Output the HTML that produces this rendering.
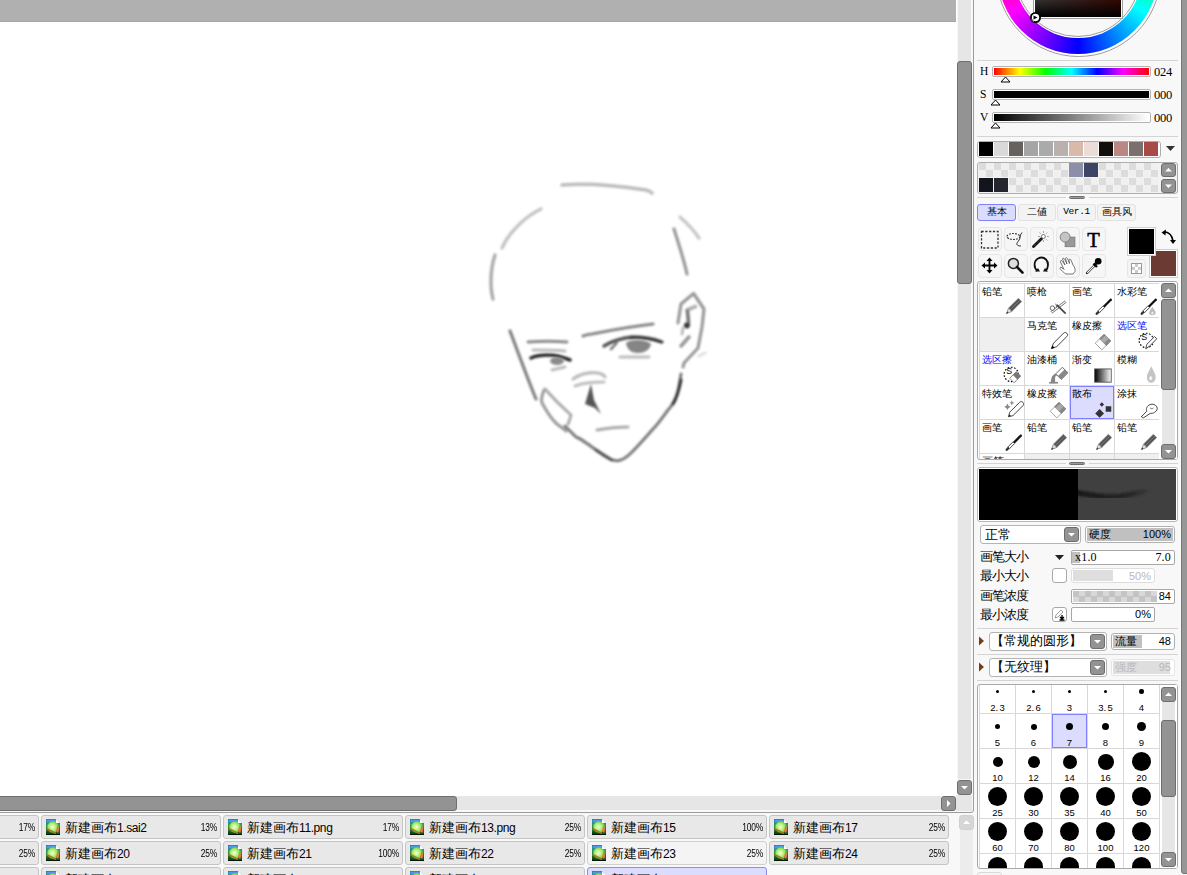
<!DOCTYPE html><html><head><meta charset="utf-8"><style>
*{margin:0;padding:0;box-sizing:border-box}
html,body{width:1187px;height:875px;overflow:hidden;background:#f8f8f8}
body{position:relative;font-family:"Liberation Sans",sans-serif;font-size:12px;color:#000}
div,span,svg{position:absolute}
.t{white-space:nowrap;line-height:1}
.btn{background:#939393;border:1px solid #6e6e6e;border-radius:3px}
.trk{background:#e6e6e6}
</style></head><body><div style="left:0px;top:0px;width:974px;height:813px;background:#f8f8f8;"></div>
<div style="left:0px;top:0px;width:957px;height:796px;background:#fff;"></div>
<div style="left:0px;top:0px;width:956px;height:22px;background:#b0b0b0;border-bottom:1px solid #a6a6a6;"></div>
<div style="left:-4px;top:-4px;width:978px;height:817px;border:1px solid #9c9c9c;border-radius:3px;"></div>
<div style="left:958px;top:0px;width:13px;height:779px;background:#e6e6e6;"></div>
<div class="btn" style="left:957px;top:61px;width:15px;height:223px;"></div>
<div class="btn" style="left:957px;top:780px;width:15px;height:15px;"><svg style="left:0;top:0" width="13" height="13"><path d="M3.0,5.0 L10.0,5.0 L6.5,8.5Z" fill="#fff"/></svg></div>
<div style="left:0px;top:796px;width:941px;height:14px;background:#e6e6e6;"></div>
<div style="left:956px;top:795px;width:16px;height:16px;background:#e6e6e6;"></div>
<div class="btn" style="left:-4px;top:796px;width:461px;height:15px;"></div>
<div class="btn" style="left:941px;top:796px;width:15px;height:15px;"><svg style="left:0;top:0" width="13" height="13"><path d="M5.0,3.0 L5.0,10.0 L8.5,6.5Z" fill="#fff"/></svg></div>

<svg style="left:0;top:0" width="957" height="796" viewBox="0 0 957 796">
<defs><filter id="bl" x="-10%" y="-10%" width="120%" height="120%"><feGaussianBlur stdDeviation="0.85"/></filter></defs>
<g fill="none" stroke-linecap="round" stroke-linejoin="round" filter="url(#bl)">
<path d="M562,185 C585,183 620,186 646,190 C650,191 652,193 652,193" stroke="#bcbcbc" stroke-width="3.6"/>
<path d="M541,209 C528,215 510,230 502,248" stroke="#c4c4c4" stroke-width="3.4"/>
<path d="M495,255 C490,270 490,288 493,299" stroke="#aaaaaa" stroke-width="3.4"/>
<path d="M680,217 C688,224 695,232 699,238" stroke="#c8c8c8" stroke-width="3.4"/>
<path d="M674,229 C679,245 684,260 687,274" stroke="#999" stroke-width="3.2"/>
<path d="M510,331 C518,352 528,380 536,399" stroke="#808080" stroke-width="3.2"/>
<path d="M678,323 L681,304 L693.6,293.5 L704,309 L702,327 L698,348 L684,363 L683,367" stroke="#999" stroke-width="3.2"/>
<path d="M681,374 C680,380 679,388 677,394 C675,400 672,406 668,410 C662,418 658,424 653,429 C646,437 638,446 632,452 C628,456 623,460 619,460.5 C615,461 612,460 610,459 C605,456 600,452 596,450 C588,444 580,438 576,437 C572,433 568,429 565,426" stroke="#7a7a7a" stroke-width="3"/>
<path d="M681,380 C679,390 677,398 673,404" stroke="#333" stroke-width="3"/>
<path d="M612,460 C606,457 600,453 596,450" stroke="#555" stroke-width="3"/>
<path d="M687,310 L695.5,306.5" stroke="#b0b0b0" stroke-width="3.6"/>
<path d="M687.5,311 C688,316 688.5,320 688.5,325" stroke="#777" stroke-width="3.6"/>
<circle cx="686.8" cy="325.5" r="3" fill="#3a3a3a" stroke="none"/>
<path d="M683,328 L682,334" stroke="#bbb" stroke-width="3"/>
<path d="M681,346 L689,337" stroke="#999" stroke-width="3.6"/>
<path d="M544,390 C542,395 541,400 542,403 C547,412 552,420 557,424 C561,427 564,429 566,431" stroke="#999" stroke-width="3"/>
<path d="M545,389 C552,397 562,407 571,415 C570,419 569,422 568,424" stroke="#aaa" stroke-width="3"/>
<path d="M583,336 C586,335 590,334 592,334 C612,330 635,326 653,324" stroke="#888" stroke-width="3.2"/>
<path d="M528,342 C540,341 555,341 567,342" stroke="#8a8a8a" stroke-width="3"/>
<path d="M533,350 C545,350 555,350 565,351" stroke="#bbb" stroke-width="3"/>
<path d="M531,358 C535,356 540,355 548,355 C556,355 563,357 570,360" stroke="#2a2a2a" stroke-width="3.6"/>
<path d="M552,370 C556,369 560,368 565,367" stroke="#bbb" stroke-width="3"/>
<path d="M604,346 C612,341 622,338 632,337 C645,337 654,339 662,342" stroke="#555" stroke-width="3.4"/>
<path d="M630,338 C642,337 652,339 661,342" stroke="#333" stroke-width="2.6"/>
<path d="M611,349 C614,346 616,344 617,342" stroke="#777" stroke-width="2.6"/>
<path d="M620,357 C630,357 640,357 649,357" stroke="#bdbdbd" stroke-width="3"/>
<path d="M573,379 C580,374 590,372 598,373 C602,374 605,376 605,377" stroke="#bbb" stroke-width="3.2"/>
<path d="M575,386 C582,383 592,382 604,382" stroke="#c0c0c0" stroke-width="3"/>
<path d="M597,430 C608,428 618,427 628,427" stroke="#aaa" stroke-width="3"/>
<path d="M699,356 L705,353" stroke="#e0e0e0" stroke-width="3"/>
</g>
<g filter="url(#bl)">
<path d="M626,343 C630,339 646,339 651,344 C650,350 644,353 638,353 C632,353 627,350 626,343Z" fill="#858585"/>
<ellipse cx="557" cy="361" rx="7" ry="4" fill="#8a8a8a"/>
<path d="M591,384 L585,404 L595,408 L601,414 L594,400 Z" fill="#555"/>
</g>
</svg>

<svg style="left:0;top:0" width="0" height="0"><defs>
<linearGradient id="icbg" x1="0" y1="0" x2="0" y2="1"><stop offset="0" stop-color="#1060c8"/><stop offset="0.35" stop-color="#30a050"/><stop offset="1" stop-color="#104010"/></linearGradient>
<radialGradient id="icc" cx="0.45" cy="0.5" r="0.6"><stop offset="0" stop-color="#f4ffe0"/><stop offset="0.5" stop-color="#b0f070"/><stop offset="1" stop-color="#50c040"/></radialGradient>
</defs></svg>
<div style="left:-141px;top:815px;width:180px;height:24px;background:#e8e8e8;border:1px solid #c4c4c4;border-radius:3px;"></div>
<div class="t" style="left:-21px;width:56px;top:822px;font-size:10.5px;letter-spacing:-0.2px;text-align:right;transform:scaleX(0.8);transform-origin:100% 50%;">17%</div>
<div style="left:41px;top:815px;width:180px;height:24px;background:#e8e8e8;border:1px solid #c4c4c4;border-radius:3px;"></div>
<svg style="left:46px;top:819px" width="14" height="16" viewBox="0 0 14 16">
<path d="M0,0 H10 L14,4 V16 H0 Z" fill="url(#icbg)"/>
<rect x="0.5" y="0.5" width="9.5" height="3" fill="#4a9ae8"/>
<circle cx="7" cy="8" r="5.8" fill="url(#icc)"/>
<path d="M11.5,6 C13.5,8 13.5,12 12,14 L10,12Z" fill="#e07a40"/>
<path d="M0.5,9.5 L10,14.5" stroke="#a8782a" stroke-width="1.8"/>
<path d="M0,13 C4,14 8,15 12,16 H0Z" fill="#0a4a10"/>
<path d="M0,15 H14 V16 H0Z" fill="#001800"/>
<path d="M10,0 V4 H14Z" fill="#fff"/>
<path d="M10,0 H14 V4Z" fill="#e8e8e8"/>
</svg>
<div class="t" style="left:65px;top:821px;font-size:13px;">新建画布<span style="position:static;font-size:12px;letter-spacing:-0.4px">1.sai2</span></div>
<div class="t" style="left:161px;width:56px;top:822px;font-size:10.5px;letter-spacing:-0.2px;text-align:right;transform:scaleX(0.8);transform-origin:100% 50%;">13%</div>
<div style="left:223px;top:815px;width:180px;height:24px;background:#e8e8e8;border:1px solid #c4c4c4;border-radius:3px;"></div>
<svg style="left:228px;top:819px" width="14" height="16" viewBox="0 0 14 16">
<path d="M0,0 H10 L14,4 V16 H0 Z" fill="url(#icbg)"/>
<rect x="0.5" y="0.5" width="9.5" height="3" fill="#4a9ae8"/>
<circle cx="7" cy="8" r="5.8" fill="url(#icc)"/>
<path d="M11.5,6 C13.5,8 13.5,12 12,14 L10,12Z" fill="#e07a40"/>
<path d="M0.5,9.5 L10,14.5" stroke="#a8782a" stroke-width="1.8"/>
<path d="M0,13 C4,14 8,15 12,16 H0Z" fill="#0a4a10"/>
<path d="M0,15 H14 V16 H0Z" fill="#001800"/>
<path d="M10,0 V4 H14Z" fill="#fff"/>
<path d="M10,0 H14 V4Z" fill="#e8e8e8"/>
</svg>
<div class="t" style="left:247px;top:821px;font-size:13px;">新建画布<span style="position:static;font-size:12px;letter-spacing:-0.4px">11.png</span></div>
<div class="t" style="left:343px;width:56px;top:822px;font-size:10.5px;letter-spacing:-0.2px;text-align:right;transform:scaleX(0.8);transform-origin:100% 50%;">17%</div>
<div style="left:405px;top:815px;width:180px;height:24px;background:#e8e8e8;border:1px solid #c4c4c4;border-radius:3px;"></div>
<svg style="left:410px;top:819px" width="14" height="16" viewBox="0 0 14 16">
<path d="M0,0 H10 L14,4 V16 H0 Z" fill="url(#icbg)"/>
<rect x="0.5" y="0.5" width="9.5" height="3" fill="#4a9ae8"/>
<circle cx="7" cy="8" r="5.8" fill="url(#icc)"/>
<path d="M11.5,6 C13.5,8 13.5,12 12,14 L10,12Z" fill="#e07a40"/>
<path d="M0.5,9.5 L10,14.5" stroke="#a8782a" stroke-width="1.8"/>
<path d="M0,13 C4,14 8,15 12,16 H0Z" fill="#0a4a10"/>
<path d="M0,15 H14 V16 H0Z" fill="#001800"/>
<path d="M10,0 V4 H14Z" fill="#fff"/>
<path d="M10,0 H14 V4Z" fill="#e8e8e8"/>
</svg>
<div class="t" style="left:429px;top:821px;font-size:13px;">新建画布<span style="position:static;font-size:12px;letter-spacing:-0.4px">13.png</span></div>
<div class="t" style="left:525px;width:56px;top:822px;font-size:10.5px;letter-spacing:-0.2px;text-align:right;transform:scaleX(0.8);transform-origin:100% 50%;">25%</div>
<div style="left:587px;top:815px;width:180px;height:24px;background:#e8e8e8;border:1px solid #c4c4c4;border-radius:3px;"></div>
<svg style="left:592px;top:819px" width="14" height="16" viewBox="0 0 14 16">
<path d="M0,0 H10 L14,4 V16 H0 Z" fill="url(#icbg)"/>
<rect x="0.5" y="0.5" width="9.5" height="3" fill="#4a9ae8"/>
<circle cx="7" cy="8" r="5.8" fill="url(#icc)"/>
<path d="M11.5,6 C13.5,8 13.5,12 12,14 L10,12Z" fill="#e07a40"/>
<path d="M0.5,9.5 L10,14.5" stroke="#a8782a" stroke-width="1.8"/>
<path d="M0,13 C4,14 8,15 12,16 H0Z" fill="#0a4a10"/>
<path d="M0,15 H14 V16 H0Z" fill="#001800"/>
<path d="M10,0 V4 H14Z" fill="#fff"/>
<path d="M10,0 H14 V4Z" fill="#e8e8e8"/>
</svg>
<div class="t" style="left:611px;top:821px;font-size:13px;">新建画布<span style="position:static;font-size:12px;letter-spacing:-0.4px">15</span></div>
<div class="t" style="left:707px;width:56px;top:822px;font-size:10.5px;letter-spacing:-0.2px;text-align:right;transform:scaleX(0.8);transform-origin:100% 50%;">100%</div>
<div style="left:769px;top:815px;width:180px;height:24px;background:#e8e8e8;border:1px solid #c4c4c4;border-radius:3px;"></div>
<svg style="left:774px;top:819px" width="14" height="16" viewBox="0 0 14 16">
<path d="M0,0 H10 L14,4 V16 H0 Z" fill="url(#icbg)"/>
<rect x="0.5" y="0.5" width="9.5" height="3" fill="#4a9ae8"/>
<circle cx="7" cy="8" r="5.8" fill="url(#icc)"/>
<path d="M11.5,6 C13.5,8 13.5,12 12,14 L10,12Z" fill="#e07a40"/>
<path d="M0.5,9.5 L10,14.5" stroke="#a8782a" stroke-width="1.8"/>
<path d="M0,13 C4,14 8,15 12,16 H0Z" fill="#0a4a10"/>
<path d="M0,15 H14 V16 H0Z" fill="#001800"/>
<path d="M10,0 V4 H14Z" fill="#fff"/>
<path d="M10,0 H14 V4Z" fill="#e8e8e8"/>
</svg>
<div class="t" style="left:793px;top:821px;font-size:13px;">新建画布<span style="position:static;font-size:12px;letter-spacing:-0.4px">17</span></div>
<div class="t" style="left:889px;width:56px;top:822px;font-size:10.5px;letter-spacing:-0.2px;text-align:right;transform:scaleX(0.8);transform-origin:100% 50%;">25%</div>
<div style="left:-141px;top:841px;width:180px;height:24px;background:#e8e8e8;border:1px solid #c4c4c4;border-radius:3px;"></div>
<div class="t" style="left:-21px;width:56px;top:848px;font-size:10.5px;letter-spacing:-0.2px;text-align:right;transform:scaleX(0.8);transform-origin:100% 50%;">25%</div>
<div style="left:41px;top:841px;width:180px;height:24px;background:#e8e8e8;border:1px solid #c4c4c4;border-radius:3px;"></div>
<svg style="left:46px;top:845px" width="14" height="16" viewBox="0 0 14 16">
<path d="M0,0 H10 L14,4 V16 H0 Z" fill="url(#icbg)"/>
<rect x="0.5" y="0.5" width="9.5" height="3" fill="#4a9ae8"/>
<circle cx="7" cy="8" r="5.8" fill="url(#icc)"/>
<path d="M11.5,6 C13.5,8 13.5,12 12,14 L10,12Z" fill="#e07a40"/>
<path d="M0.5,9.5 L10,14.5" stroke="#a8782a" stroke-width="1.8"/>
<path d="M0,13 C4,14 8,15 12,16 H0Z" fill="#0a4a10"/>
<path d="M0,15 H14 V16 H0Z" fill="#001800"/>
<path d="M10,0 V4 H14Z" fill="#fff"/>
<path d="M10,0 H14 V4Z" fill="#e8e8e8"/>
</svg>
<div class="t" style="left:65px;top:847px;font-size:13px;">新建画布<span style="position:static;font-size:12px;letter-spacing:-0.4px">20</span></div>
<div class="t" style="left:161px;width:56px;top:848px;font-size:10.5px;letter-spacing:-0.2px;text-align:right;transform:scaleX(0.8);transform-origin:100% 50%;">25%</div>
<div style="left:223px;top:841px;width:180px;height:24px;background:#e8e8e8;border:1px solid #c4c4c4;border-radius:3px;"></div>
<svg style="left:228px;top:845px" width="14" height="16" viewBox="0 0 14 16">
<path d="M0,0 H10 L14,4 V16 H0 Z" fill="url(#icbg)"/>
<rect x="0.5" y="0.5" width="9.5" height="3" fill="#4a9ae8"/>
<circle cx="7" cy="8" r="5.8" fill="url(#icc)"/>
<path d="M11.5,6 C13.5,8 13.5,12 12,14 L10,12Z" fill="#e07a40"/>
<path d="M0.5,9.5 L10,14.5" stroke="#a8782a" stroke-width="1.8"/>
<path d="M0,13 C4,14 8,15 12,16 H0Z" fill="#0a4a10"/>
<path d="M0,15 H14 V16 H0Z" fill="#001800"/>
<path d="M10,0 V4 H14Z" fill="#fff"/>
<path d="M10,0 H14 V4Z" fill="#e8e8e8"/>
</svg>
<div class="t" style="left:247px;top:847px;font-size:13px;">新建画布<span style="position:static;font-size:12px;letter-spacing:-0.4px">21</span></div>
<div class="t" style="left:343px;width:56px;top:848px;font-size:10.5px;letter-spacing:-0.2px;text-align:right;transform:scaleX(0.8);transform-origin:100% 50%;">100%</div>
<div style="left:405px;top:841px;width:180px;height:24px;background:#e8e8e8;border:1px solid #c4c4c4;border-radius:3px;"></div>
<svg style="left:410px;top:845px" width="14" height="16" viewBox="0 0 14 16">
<path d="M0,0 H10 L14,4 V16 H0 Z" fill="url(#icbg)"/>
<rect x="0.5" y="0.5" width="9.5" height="3" fill="#4a9ae8"/>
<circle cx="7" cy="8" r="5.8" fill="url(#icc)"/>
<path d="M11.5,6 C13.5,8 13.5,12 12,14 L10,12Z" fill="#e07a40"/>
<path d="M0.5,9.5 L10,14.5" stroke="#a8782a" stroke-width="1.8"/>
<path d="M0,13 C4,14 8,15 12,16 H0Z" fill="#0a4a10"/>
<path d="M0,15 H14 V16 H0Z" fill="#001800"/>
<path d="M10,0 V4 H14Z" fill="#fff"/>
<path d="M10,0 H14 V4Z" fill="#e8e8e8"/>
</svg>
<div class="t" style="left:429px;top:847px;font-size:13px;">新建画布<span style="position:static;font-size:12px;letter-spacing:-0.4px">22</span></div>
<div class="t" style="left:525px;width:56px;top:848px;font-size:10.5px;letter-spacing:-0.2px;text-align:right;transform:scaleX(0.8);transform-origin:100% 50%;">25%</div>
<div style="left:587px;top:841px;width:180px;height:24px;background:#f4f4f4;border:1px solid #d0d0d0;border-radius:3px;"></div>
<svg style="left:592px;top:845px" width="14" height="16" viewBox="0 0 14 16">
<path d="M0,0 H10 L14,4 V16 H0 Z" fill="url(#icbg)"/>
<rect x="0.5" y="0.5" width="9.5" height="3" fill="#4a9ae8"/>
<circle cx="7" cy="8" r="5.8" fill="url(#icc)"/>
<path d="M11.5,6 C13.5,8 13.5,12 12,14 L10,12Z" fill="#e07a40"/>
<path d="M0.5,9.5 L10,14.5" stroke="#a8782a" stroke-width="1.8"/>
<path d="M0,13 C4,14 8,15 12,16 H0Z" fill="#0a4a10"/>
<path d="M0,15 H14 V16 H0Z" fill="#001800"/>
<path d="M10,0 V4 H14Z" fill="#fff"/>
<path d="M10,0 H14 V4Z" fill="#f4f4f4"/>
</svg>
<div class="t" style="left:611px;top:847px;font-size:13px;">新建画布<span style="position:static;font-size:12px;letter-spacing:-0.4px">23</span></div>
<div class="t" style="left:707px;width:56px;top:848px;font-size:10.5px;letter-spacing:-0.2px;text-align:right;transform:scaleX(0.8);transform-origin:100% 50%;">25%</div>
<div style="left:769px;top:841px;width:180px;height:24px;background:#e8e8e8;border:1px solid #c4c4c4;border-radius:3px;"></div>
<svg style="left:774px;top:845px" width="14" height="16" viewBox="0 0 14 16">
<path d="M0,0 H10 L14,4 V16 H0 Z" fill="url(#icbg)"/>
<rect x="0.5" y="0.5" width="9.5" height="3" fill="#4a9ae8"/>
<circle cx="7" cy="8" r="5.8" fill="url(#icc)"/>
<path d="M11.5,6 C13.5,8 13.5,12 12,14 L10,12Z" fill="#e07a40"/>
<path d="M0.5,9.5 L10,14.5" stroke="#a8782a" stroke-width="1.8"/>
<path d="M0,13 C4,14 8,15 12,16 H0Z" fill="#0a4a10"/>
<path d="M0,15 H14 V16 H0Z" fill="#001800"/>
<path d="M10,0 V4 H14Z" fill="#fff"/>
<path d="M10,0 H14 V4Z" fill="#e8e8e8"/>
</svg>
<div class="t" style="left:793px;top:847px;font-size:13px;">新建画布<span style="position:static;font-size:12px;letter-spacing:-0.4px">24</span></div>
<div class="t" style="left:889px;width:56px;top:848px;font-size:10.5px;letter-spacing:-0.2px;text-align:right;transform:scaleX(0.8);transform-origin:100% 50%;">25%</div>
<div style="left:-141px;top:867px;width:180px;height:24px;background:#e8e8e8;border:1px solid #c4c4c4;border-radius:3px;"></div>
<div style="left:41px;top:867px;width:180px;height:24px;background:#e8e8e8;border:1px solid #c4c4c4;border-radius:3px;"></div>
<svg style="left:46px;top:871px" width="14" height="16" viewBox="0 0 14 16">
<path d="M0,0 H10 L14,4 V16 H0 Z" fill="url(#icbg)"/>
<rect x="0.5" y="0.5" width="9.5" height="3" fill="#4a9ae8"/>
<circle cx="7" cy="8" r="5.8" fill="url(#icc)"/>
<path d="M11.5,6 C13.5,8 13.5,12 12,14 L10,12Z" fill="#e07a40"/>
<path d="M0.5,9.5 L10,14.5" stroke="#a8782a" stroke-width="1.8"/>
<path d="M0,13 C4,14 8,15 12,16 H0Z" fill="#0a4a10"/>
<path d="M0,15 H14 V16 H0Z" fill="#001800"/>
<path d="M10,0 V4 H14Z" fill="#fff"/>
<path d="M10,0 H14 V4Z" fill="#e8e8e8"/>
</svg>
<div class="t" style="left:65px;top:873px;font-size:13px;">新建画布</div>
<div style="left:223px;top:867px;width:180px;height:24px;background:#e8e8e8;border:1px solid #c4c4c4;border-radius:3px;"></div>
<svg style="left:228px;top:871px" width="14" height="16" viewBox="0 0 14 16">
<path d="M0,0 H10 L14,4 V16 H0 Z" fill="url(#icbg)"/>
<rect x="0.5" y="0.5" width="9.5" height="3" fill="#4a9ae8"/>
<circle cx="7" cy="8" r="5.8" fill="url(#icc)"/>
<path d="M11.5,6 C13.5,8 13.5,12 12,14 L10,12Z" fill="#e07a40"/>
<path d="M0.5,9.5 L10,14.5" stroke="#a8782a" stroke-width="1.8"/>
<path d="M0,13 C4,14 8,15 12,16 H0Z" fill="#0a4a10"/>
<path d="M0,15 H14 V16 H0Z" fill="#001800"/>
<path d="M10,0 V4 H14Z" fill="#fff"/>
<path d="M10,0 H14 V4Z" fill="#e8e8e8"/>
</svg>
<div class="t" style="left:247px;top:873px;font-size:13px;">新建画布</div>
<div style="left:405px;top:867px;width:180px;height:24px;background:#e8e8e8;border:1px solid #c4c4c4;border-radius:3px;"></div>
<svg style="left:410px;top:871px" width="14" height="16" viewBox="0 0 14 16">
<path d="M0,0 H10 L14,4 V16 H0 Z" fill="url(#icbg)"/>
<rect x="0.5" y="0.5" width="9.5" height="3" fill="#4a9ae8"/>
<circle cx="7" cy="8" r="5.8" fill="url(#icc)"/>
<path d="M11.5,6 C13.5,8 13.5,12 12,14 L10,12Z" fill="#e07a40"/>
<path d="M0.5,9.5 L10,14.5" stroke="#a8782a" stroke-width="1.8"/>
<path d="M0,13 C4,14 8,15 12,16 H0Z" fill="#0a4a10"/>
<path d="M0,15 H14 V16 H0Z" fill="#001800"/>
<path d="M10,0 V4 H14Z" fill="#fff"/>
<path d="M10,0 H14 V4Z" fill="#e8e8e8"/>
</svg>
<div class="t" style="left:429px;top:873px;font-size:13px;">新建画布</div>
<div style="left:587px;top:867px;width:180px;height:24px;background:#dcdcff;border:1px solid #8c8cf0;border-radius:3px;"></div>
<svg style="left:592px;top:871px" width="14" height="16" viewBox="0 0 14 16">
<path d="M0,0 H10 L14,4 V16 H0 Z" fill="url(#icbg)"/>
<rect x="0.5" y="0.5" width="9.5" height="3" fill="#4a9ae8"/>
<circle cx="7" cy="8" r="5.8" fill="url(#icc)"/>
<path d="M11.5,6 C13.5,8 13.5,12 12,14 L10,12Z" fill="#e07a40"/>
<path d="M0.5,9.5 L10,14.5" stroke="#a8782a" stroke-width="1.8"/>
<path d="M0,13 C4,14 8,15 12,16 H0Z" fill="#0a4a10"/>
<path d="M0,15 H14 V16 H0Z" fill="#001800"/>
<path d="M10,0 V4 H14Z" fill="#fff"/>
<path d="M10,0 H14 V4Z" fill="#dcdcff"/>
</svg>
<div class="t" style="left:611px;top:873px;font-size:13px;">新建画布</div>
<div style="left:960px;top:830px;width:13px;height:45px;background:#ececec;"></div>
<div class="btn" style="background:#d6d6d6;border-color:#d0d0d0;left:959px;top:815px;width:15px;height:15px;"><svg style="left:0;top:0" width="13" height="13"><path d="M3.0,8.0 L10.0,8.0 L6.5,4.5Z" fill="#fff"/></svg></div>
<div style="left:974px;top:0px;width:213px;height:875px;background:#f8f8f8;"></div>
<div style="left:1180px;top:0px;width:1px;height:875px;background:#fcfcfc;"></div>
<div style="left:1181px;top:-5px;width:8px;height:879px;background:#979797;border:1px solid #737373;border-radius:3px;"></div>
<div style="left:995.5px;top:-108.5px;width:165.0px;height:165.0px;border-radius:50%;background:#fff;border:1px solid #9c9c9c;"></div>
<div style="left:997.8px;top:-106.2px;width:160.4px;height:160.4px;border-radius:50%;background:conic-gradient(from -60deg,#f00,#ff0,#0f0,#0ff,#00f,#f0f,#f00);"></div>
<div style="left:1013.6px;top:-90.4px;width:128.8px;height:128.8px;border-radius:50%;background:#fff;"></div>
<div style="left:1014.8px;top:-89.2px;width:126.4px;height:126.4px;border-radius:50%;background:#f8f8f8;border:1px solid #9c9c9c;"></div>
<div style="left:1033px;top:-72px;width:90px;height:91px;background:#fff;border:1px solid #a0a0a0;"></div>
<div style="left:1035px;top:-70px;width:86px;height:87px;background:linear-gradient(to top,#000,rgba(0,0,0,0)),linear-gradient(to right,#fff,#ff2200);"></div>
<svg style="left:1029px;top:11px" width="13" height="13"><circle cx="6.5" cy="6.5" r="4.6" fill="#fff" stroke="#000" stroke-width="1.8"/><path d="M4.5,4.5 L8.5,6.5 L4.5,8.5Z" fill="#000"/><path d="M2.5,8 A4.6,4.6 0 0 0 5,11" stroke="#3a3" stroke-width="1" fill="none"/></svg>
<div style="left:977px;top:60px;width:201px;height:1px;background:#d4d4d4;"></div>
<div class="t" style="left:980px;top:66px;font-size:11.5px;color:#000;font-family:'Liberation Serif',serif;">H</div>
<div style="left:992px;top:66px;width:159px;height:11px;background:#fff;border:1px solid #b4b4b4;border-radius:2px;"></div>
<div style="left:994px;top:68px;width:155px;height:7px;background:linear-gradient(to right,#f00,#ff0,#0f0,#0ff,#00f,#f0f,#f00);"></div>
<div class="t" style="left:1154px;top:66px;font-size:12.5px;color:#000;font-family:'Liberation Serif',serif;letter-spacing:-0.3px;">024</div>
<svg style="left:999.5px;top:76px" width="11" height="7"><path d="M1,6 L5.5,1 L10,6Z" fill="#fff" stroke="#000" stroke-width="1" stroke-linejoin="miter"/></svg>
<div class="t" style="left:980px;top:89px;font-size:11.5px;color:#000;font-family:'Liberation Serif',serif;">S</div>
<div style="left:992px;top:89px;width:159px;height:11px;background:#fff;border:1px solid #b4b4b4;border-radius:2px;"></div>
<div style="left:994px;top:91px;width:155px;height:7px;background:#000;"></div>
<div class="t" style="left:1154px;top:89px;font-size:12.5px;color:#000;font-family:'Liberation Serif',serif;letter-spacing:-0.3px;">000</div>
<svg style="left:989.5px;top:99px" width="11" height="7"><path d="M1,6 L5.5,1 L10,6Z" fill="#fff" stroke="#000" stroke-width="1" stroke-linejoin="miter"/></svg>
<div class="t" style="left:980px;top:112px;font-size:11.5px;color:#000;font-family:'Liberation Serif',serif;">V</div>
<div style="left:992px;top:112px;width:159px;height:11px;background:#fff;border:1px solid #b4b4b4;border-radius:2px;"></div>
<div style="left:994px;top:114px;width:155px;height:7px;background:linear-gradient(to right,#000,#fff);"></div>
<div class="t" style="left:1154px;top:112px;font-size:12.5px;color:#000;font-family:'Liberation Serif',serif;letter-spacing:-0.3px;">000</div>
<svg style="left:989.5px;top:122px" width="11" height="7"><path d="M1,6 L5.5,1 L10,6Z" fill="#fff" stroke="#000" stroke-width="1" stroke-linejoin="miter"/></svg>
<div style="left:977px;top:136px;width:201px;height:1px;background:#d4d4d4;"></div>
<div style="left:977px;top:141px;width:184px;height:17px;background:#fff;border:1px solid #adadad;border-radius:3px;"></div>
<div style="left:979px;top:142px;width:14px;height:14px;background:#000000;"></div>
<div style="left:994px;top:142px;width:14px;height:14px;background:#d9d9d9;"></div>
<div style="left:1009px;top:142px;width:14px;height:14px;background:#67625e;"></div>
<div style="left:1024px;top:142px;width:14px;height:14px;background:#a5a5a5;"></div>
<div style="left:1039px;top:142px;width:14px;height:14px;background:#aaaaaa;"></div>
<div style="left:1054px;top:142px;width:14px;height:14px;background:#b8b1ad;"></div>
<div style="left:1069px;top:142px;width:14px;height:14px;background:#d8b9aa;"></div>
<div style="left:1084px;top:142px;width:14px;height:14px;background:#eaddd8;"></div>
<div style="left:1099px;top:142px;width:14px;height:14px;background:#110e0c;"></div>
<div style="left:1114px;top:142px;width:14px;height:14px;background:#ba8785;"></div>
<div style="left:1129px;top:142px;width:14px;height:14px;background:#7b706d;"></div>
<div style="left:1144px;top:142px;width:14px;height:14px;background:#a84a47;"></div>
<svg style="left:1165px;top:145px" width="11" height="7"><path d="M1,1 L10,1 L5.5,6Z" fill="#333"/></svg>
<div style="left:977px;top:162px;width:201px;height:32px;background:#f2f2f2;border:1px solid #adadad;border-radius:3px;"></div>
<div style="left:979px;top:163px;width:14px;height:14px;background:conic-gradient(#f0f0f0 25%,#dcdcdc 0 50%,#f0f0f0 0 75%,#dcdcdc 0);"></div>
<div style="left:994px;top:163px;width:14px;height:14px;background:conic-gradient(#f0f0f0 25%,#dcdcdc 0 50%,#f0f0f0 0 75%,#dcdcdc 0);"></div>
<div style="left:1009px;top:163px;width:14px;height:14px;background:conic-gradient(#f0f0f0 25%,#dcdcdc 0 50%,#f0f0f0 0 75%,#dcdcdc 0);"></div>
<div style="left:1024px;top:163px;width:14px;height:14px;background:conic-gradient(#f0f0f0 25%,#dcdcdc 0 50%,#f0f0f0 0 75%,#dcdcdc 0);"></div>
<div style="left:1039px;top:163px;width:14px;height:14px;background:conic-gradient(#f0f0f0 25%,#dcdcdc 0 50%,#f0f0f0 0 75%,#dcdcdc 0);"></div>
<div style="left:1054px;top:163px;width:14px;height:14px;background:conic-gradient(#f0f0f0 25%,#dcdcdc 0 50%,#f0f0f0 0 75%,#dcdcdc 0);"></div>
<div style="left:1069px;top:163px;width:14px;height:14px;background:conic-gradient(#f0f0f0 25%,#dcdcdc 0 50%,#f0f0f0 0 75%,#dcdcdc 0);"></div>
<div style="left:1084px;top:163px;width:14px;height:14px;background:conic-gradient(#f0f0f0 25%,#dcdcdc 0 50%,#f0f0f0 0 75%,#dcdcdc 0);"></div>
<div style="left:1099px;top:163px;width:14px;height:14px;background:conic-gradient(#f0f0f0 25%,#dcdcdc 0 50%,#f0f0f0 0 75%,#dcdcdc 0);"></div>
<div style="left:1114px;top:163px;width:14px;height:14px;background:conic-gradient(#f0f0f0 25%,#dcdcdc 0 50%,#f0f0f0 0 75%,#dcdcdc 0);"></div>
<div style="left:1129px;top:163px;width:14px;height:14px;background:conic-gradient(#f0f0f0 25%,#dcdcdc 0 50%,#f0f0f0 0 75%,#dcdcdc 0);"></div>
<div style="left:1144px;top:163px;width:14px;height:14px;background:conic-gradient(#f0f0f0 25%,#dcdcdc 0 50%,#f0f0f0 0 75%,#dcdcdc 0);"></div>
<div style="left:979px;top:178px;width:14px;height:14px;background:conic-gradient(#f0f0f0 25%,#dcdcdc 0 50%,#f0f0f0 0 75%,#dcdcdc 0);"></div>
<div style="left:994px;top:178px;width:14px;height:14px;background:conic-gradient(#f0f0f0 25%,#dcdcdc 0 50%,#f0f0f0 0 75%,#dcdcdc 0);"></div>
<div style="left:1009px;top:178px;width:14px;height:14px;background:conic-gradient(#f0f0f0 25%,#dcdcdc 0 50%,#f0f0f0 0 75%,#dcdcdc 0);"></div>
<div style="left:1024px;top:178px;width:14px;height:14px;background:conic-gradient(#f0f0f0 25%,#dcdcdc 0 50%,#f0f0f0 0 75%,#dcdcdc 0);"></div>
<div style="left:1039px;top:178px;width:14px;height:14px;background:conic-gradient(#f0f0f0 25%,#dcdcdc 0 50%,#f0f0f0 0 75%,#dcdcdc 0);"></div>
<div style="left:1054px;top:178px;width:14px;height:14px;background:conic-gradient(#f0f0f0 25%,#dcdcdc 0 50%,#f0f0f0 0 75%,#dcdcdc 0);"></div>
<div style="left:1069px;top:178px;width:14px;height:14px;background:conic-gradient(#f0f0f0 25%,#dcdcdc 0 50%,#f0f0f0 0 75%,#dcdcdc 0);"></div>
<div style="left:1084px;top:178px;width:14px;height:14px;background:conic-gradient(#f0f0f0 25%,#dcdcdc 0 50%,#f0f0f0 0 75%,#dcdcdc 0);"></div>
<div style="left:1099px;top:178px;width:14px;height:14px;background:conic-gradient(#f0f0f0 25%,#dcdcdc 0 50%,#f0f0f0 0 75%,#dcdcdc 0);"></div>
<div style="left:1114px;top:178px;width:14px;height:14px;background:conic-gradient(#f0f0f0 25%,#dcdcdc 0 50%,#f0f0f0 0 75%,#dcdcdc 0);"></div>
<div style="left:1129px;top:178px;width:14px;height:14px;background:conic-gradient(#f0f0f0 25%,#dcdcdc 0 50%,#f0f0f0 0 75%,#dcdcdc 0);"></div>
<div style="left:1144px;top:178px;width:14px;height:14px;background:conic-gradient(#f0f0f0 25%,#dcdcdc 0 50%,#f0f0f0 0 75%,#dcdcdc 0);"></div>
<div style="left:1069px;top:163px;width:14px;height:14px;background:#8b8fa8;"></div>
<div style="left:1084px;top:163px;width:14px;height:14px;background:#3d4466;"></div>
<div style="left:979px;top:178px;width:14px;height:14px;background:#12151c;"></div>
<div style="left:994px;top:178px;width:14px;height:14px;background:#25252d;"></div>
<div class="btn" style="left:1161px;top:163px;width:15px;height:14px;"><svg style="left:0;top:0" width="13" height="12"><path d="M3.0,7.5 L10.0,7.5 L6.5,4.0Z" fill="#fff"/></svg></div>
<div class="btn" style="left:1161px;top:179px;width:15px;height:14px;"><svg style="left:0;top:0" width="13" height="12"><path d="M3.0,4.5 L10.0,4.5 L6.5,8.0Z" fill="#fff"/></svg></div>
<div style="left:977px;top:197px;width:89px;height:1px;background:#d4d4d4;"></div>
<div style="left:1089px;top:197px;width:89px;height:1px;background:#d4d4d4;"></div>
<div style="left:1069px;top:196px;width:16px;height:3px;background:#9a9a9a;border:1px solid #6e6e6e;border-radius:2px;"></div>
<div style="left:977px;top:204px;width:39px;height:17px;background:#dcdcff;border:1px solid #8080ff;border-radius:3px;"></div>
<div class="t" style="left:977px;width:39px;text-align:center;top:207px;font-size:10.3px;">基本</div>
<div style="left:1018px;top:204px;width:38px;height:17px;background:#f3f3f3;border:1px solid #e2e2e2;border-radius:3px;"></div>
<div class="t" style="left:1018px;width:38px;text-align:center;top:207px;font-size:10.3px;">二値</div>
<div style="left:1057px;top:204px;width:39px;height:17px;background:#f3f3f3;border:1px solid #e2e2e2;border-radius:3px;"></div>
<div class="t" style="left:1057px;width:39px;text-align:center;top:207px;font-size:9.5px;letter-spacing:-0.4px;font-family:'Liberation Mono',monospace;">Ver.1</div>
<div style="left:1097px;top:204px;width:39px;height:17px;background:#f3f3f3;border:1px solid #e2e2e2;border-radius:3px;"></div>
<div class="t" style="left:1097px;width:39px;text-align:center;top:207px;font-size:10.3px;">画具风</div>
<div style="left:978px;top:227px;width:24px;height:24px;background:#f6f6f6;border:1px solid #e6e6e6;border-radius:4px;"></div>
<svg style="left:978px;top:227px" width="24" height="24" viewBox="0 0 24 24"><rect x="3.5" y="4.5" width="16.5" height="16.5" fill="none" stroke="#333" stroke-width="1.3" stroke-dasharray="2.2,1.6"/></svg>
<div style="left:1004px;top:227px;width:24px;height:24px;background:#f6f6f6;border:1px solid #e6e6e6;border-radius:4px;"></div>
<svg style="left:1004px;top:227px" width="24" height="24" viewBox="0 0 24 24"><ellipse cx="9.4" cy="9.5" rx="6.4" ry="3" fill="none" stroke="#333" stroke-width="1.1" stroke-dasharray="1.8,1.2"/><path d="M18,5.5 C15,9 17,11 14.5,14 C12,16.5 12,19 17,19" fill="none" stroke="#333" stroke-width="1"/></svg>
<div style="left:1030px;top:227px;width:24px;height:24px;background:#f6f6f6;border:1px solid #e6e6e6;border-radius:4px;"></div>
<svg style="left:1030px;top:227px" width="24" height="24" viewBox="0 0 24 24"><path d="M3.5,19.5 L11.7,11.5" stroke="#111" stroke-width="2.8" stroke-linecap="round"/><path d="M4,19 L11.5,11.7" stroke="#888" stroke-width="0.6" stroke-dasharray="1,1"/><circle cx="13.4" cy="9.5" r="2" fill="#fff" stroke="#666" stroke-width="0.9"/><path d="M13.4,4 V6 M13.4,13 V15 M8,9.5 H10 M17,9.5 H19 M9.5,5.5 L10.8,6.8 M17.3,5.5 L16,6.8 M17.3,13.5 L16,12.2" stroke="#999" stroke-width="0.9"/></svg>
<div style="left:1056px;top:227px;width:24px;height:24px;background:#f6f6f6;border:1px solid #e6e6e6;border-radius:4px;"></div>
<svg style="left:1056px;top:227px" width="24" height="24" viewBox="0 0 24 24"><rect x="9.1" y="10.1" width="9.8" height="9.6" fill="#999" stroke="#777" stroke-width="0.8"/><circle cx="9.1" cy="10.1" r="5" fill="#c4c4c4" stroke="#777" stroke-width="0.8"/></svg>
<div style="left:1082px;top:227px;width:24px;height:24px;background:#f6f6f6;border:1px solid #e6e6e6;border-radius:4px;"></div>
<svg style="left:1082px;top:227px" width="24" height="24" viewBox="0 0 24 24"><text x="11.6" y="20" font-family="Liberation Serif" font-size="20.5" text-anchor="middle" fill="#000" stroke="#000" stroke-width="0.5">T</text></svg>
<div style="left:978px;top:254px;width:24px;height:24px;background:#f6f6f6;border:1px solid #e6e6e6;border-radius:4px;"></div>
<svg style="left:978px;top:254px" width="24" height="24" viewBox="0 0 24 24"><path d="M11.5,5 V18 M5,11.5 H18" stroke="#000" stroke-width="1.8"/><path d="M11.5,3.5 L8.5,7 H14.5Z M11.5,19.5 L8.5,16 H14.5Z M3.5,11.5 L7,8.5 V14.5Z M19.5,11.5 L16,8.5 V14.5Z" fill="#000"/></svg>
<div style="left:1004px;top:254px;width:24px;height:24px;background:#f6f6f6;border:1px solid #e6e6e6;border-radius:4px;"></div>
<svg style="left:1004px;top:254px" width="24" height="24" viewBox="0 0 24 24"><circle cx="9.4" cy="9.4" r="5" fill="#ddd" stroke="#222" stroke-width="1.5"/><path d="M13,13 L18.5,18.6" stroke="#111" stroke-width="2.6" stroke-linecap="round"/></svg>
<div style="left:1030px;top:254px;width:24px;height:24px;background:#f6f6f6;border:1px solid #e6e6e6;border-radius:4px;"></div>
<svg style="left:1030px;top:254px" width="24" height="24" viewBox="0 0 24 24"><path d="M7.5,17 C3.5,14 3.5,7 8,4.5 C11,3 14,3.5 16,5.5 C19,8.5 18.5,14 15.5,17" fill="none" stroke="#111" stroke-width="1.8"/><path d="M5,17.5 L10,17.5 L8,14Z M13,17.5 L18,17.5 L15,14Z" fill="#111"/></svg>
<div style="left:1056px;top:254px;width:24px;height:24px;background:#f6f6f6;border:1px solid #e6e6e6;border-radius:4px;"></div>
<svg style="left:1056px;top:254px" width="24" height="24" viewBox="0 0 24 24"><path d="M10,20 C8,19 5,16 4,14.5 C4,13 5.5,13 7,14.5 L8,15.5 L4.5,8 C4,6.5 5.5,6 6.5,7.5 L9,11 L6.5,5 C6.5,4 8,4 8.5,5 L11,10 L9.5,4.5 C9.5,3.5 11,3.5 11.5,4.5 L13.5,9.5 L13,6 C13,5 14.5,5 15,6 L17,11 C18.5,13 19.5,15 19,17.5 L17,20 Z" fill="#fff" stroke="#555" stroke-width="0.8"/></svg>
<div style="left:1082px;top:254px;width:24px;height:24px;background:#f6f6f6;border:1px solid #e6e6e6;border-radius:4px;"></div>
<svg style="left:1082px;top:254px" width="24" height="24" viewBox="0 0 24 24"><path d="M5,19 L13,11" stroke="#222" stroke-width="2.4" stroke-linecap="round"/><path d="M5.2,18.8 L12.8,11.2" stroke="#fff" stroke-width="1.1"/><path d="M11.5,9.5 L15,13" stroke="#000" stroke-width="2.4"/><circle cx="16.2" cy="7.2" r="3.3" fill="#000"/><path d="M13.5,8 L15.5,10" stroke="#000" stroke-width="3"/></svg>
<div style="left:1149px;top:249px;width:29px;height:29px;background:#fff;border:1px solid #cfcfcf;"></div>
<div style="left:1151px;top:251px;width:25px;height:25px;background:#6b3a33;"></div>
<div style="left:1127px;top:227px;width:29px;height:29px;background:#fff;border:1px solid #cfcfcf;"></div>
<div style="left:1129px;top:229px;width:25px;height:25px;background:#000;"></div>
<svg style="left:1160px;top:229px" width="17" height="16"><path d="M4,3 C9,3 12,6 13,12" fill="none" stroke="#000" stroke-width="1.6"/><path d="M1.5,3.5 L6,0.5 L5.5,6.5Z M10,11 L16,11 L13,15Z" fill="#000"/></svg>
<div style="left:1127px;top:259px;width:19px;height:19px;background:#f4f4f4;border:1px solid #e6e6e6;border-radius:3px;"></div>
<div style="left:1131px;top:263px;width:11px;height:11px;border:1px solid #999;background-color:#fff;background-image:linear-gradient(45deg,#ccc 25%,transparent 25%,transparent 75%,#ccc 75%),linear-gradient(45deg,#ccc 25%,transparent 25%,transparent 75%,#ccc 75%);background-size:6px 6px;background-position:0 0,3px 3px;"></div>
<div style="left:977px;top:281px;width:201px;height:179px;background:#fff;border:1px solid #a8a8a8;border-radius:3px;"></div>
<div style="left:979px;top:283px;width:180px;height:176px;background:#d8d8d8;"></div>
<div style="left:980px;top:284px;width:44px;height:33px;background:#fff;"></div>
<div class="t" style="left:982px;top:287px;font-size:10px;color:#000;">铅笔</div>
<svg style="left:1003px;top:297px" width="21" height="20" viewBox="0 0 19 18"><path d="M3,15 L5,10 L14,1 L17,4 L8,13 Z" fill="#555"/><path d="M5,10 L14,1 M6.5,11.5 L15.5,2.5 M8,13 L17,4" stroke="#888" stroke-width="0.6"/><path d="M3,15 L5,10 L8,13Z" fill="#ddd" stroke="#777" stroke-width="0.5"/><path d="M3,15 L3.8,13 L5,14.2Z" fill="#333"/></svg>
<div style="left:1025px;top:284px;width:44px;height:33px;background:#fff;"></div>
<div class="t" style="left:1027px;top:287px;font-size:10px;color:#000;">喷枪</div>
<svg style="left:1048px;top:297px" width="21" height="20" viewBox="0 0 19 18"><path d="M3,14 L16,4" stroke="#555" stroke-width="2.4"/><path d="M3,14 L16,4" stroke="#fff" stroke-width="1.2"/><path d="M8,7 L16,15" stroke="#444" stroke-width="1.5"/><circle cx="4" cy="10" r="2" fill="#fff" stroke="#555" stroke-width="0.8"/><path d="M7,6 L8,9" stroke="#555" stroke-width="0.8"/></svg>
<div style="left:1070px;top:284px;width:44px;height:33px;background:#fff;"></div>
<div class="t" style="left:1072px;top:287px;font-size:10px;color:#000;">画笔</div>
<svg style="left:1093px;top:297px" width="21" height="20" viewBox="0 0 19 18"><path d="M9,8 L15.5,1.5 C16.5,1 17.5,2 17,3 L10.5,9.5Z" fill="#111"/><path d="M9,8 L10.5,9.5 L6,14 L4.5,12.5Z" fill="#fff" stroke="#333" stroke-width="0.8"/><path d="M4.5,12.5 L6,14 L4,16 C2.5,16.5 2,15.5 2.5,14.5Z" fill="#333"/></svg>
<div style="left:1115px;top:284px;width:44px;height:33px;background:#fff;"></div>
<div class="t" style="left:1117px;top:287px;font-size:10px;color:#000;">水彩笔</div>
<svg style="left:1138px;top:297px" width="21" height="20" viewBox="0 0 19 18"><path d="M9,8 L15.5,1.5 C16.5,1 17.5,2 17,3 L10.5,9.5Z" fill="#111"/><path d="M9,8 L10.5,9.5 L6,14 L4.5,12.5Z" fill="#fff" stroke="#333" stroke-width="0.8"/><path d="M4.5,12.5 L6,14 L4,16 C2.5,16.5 2,15.5 2.5,14.5Z" fill="#333"/><path d="M13,9 C15,12 16,13 16,14.5 C16,16 14,16.5 13,16.5 C11.5,16.5 10,16 10,14.5 C10,13 11,12 13,9Z" fill="#bbb"/><ellipse cx="13" cy="14.5" rx="1" ry="1.2" fill="#eee"/></svg>
<div style="left:980px;top:318px;width:44px;height:33px;background:#efefef;"></div>
<div style="left:1025px;top:318px;width:44px;height:33px;background:#fff;"></div>
<div class="t" style="left:1027px;top:321px;font-size:10px;color:#000;">马克笔</div>
<svg style="left:1048px;top:331px" width="21" height="20" viewBox="0 0 19 18"><path d="M3,16 L5,11 L14,2 C15,1 16,1 17,2 C18,3 18,4 17,5 L8,14 Z" fill="#fff" stroke="#444" stroke-width="0.9"/><path d="M3,16 L4,13 L6,15Z" fill="#000"/></svg>
<div style="left:1070px;top:318px;width:44px;height:33px;background:#fff;"></div>
<div class="t" style="left:1072px;top:321px;font-size:10px;color:#000;">橡皮擦</div>
<svg style="left:1093px;top:331px" width="21" height="20" viewBox="0 0 19 18"><path d="M2,11 L10,3 L16,9 L8,17Z" fill="#fff" stroke="#999" stroke-width="0.8"/><path d="M6,7 L10,3 L16,9 L12,13Z" fill="#888" stroke="#777" stroke-width="0.6"/><path d="M7,8 L11,4 L14,7 L10,11Z" fill="#aaa"/></svg>
<div style="left:1115px;top:318px;width:44px;height:33px;background:#fff;"></div>
<div class="t" style="left:1117px;top:321px;font-size:10px;color:#0000ff;">选区笔</div>
<svg style="left:1138px;top:331px" width="21" height="20" viewBox="0 0 19 18"><circle cx="7.5" cy="8.5" r="6.5" fill="none" stroke="#000" stroke-dasharray="1.5,1.5"/><text x="3" y="8" font-family="Liberation Sans" font-size="8" fill="#000">S</text><path d="M7,16 L8,12 L15,5 L17,7 L10,14Z" fill="#fff" stroke="#333" stroke-width="0.8"/></svg>
<div style="left:980px;top:352px;width:44px;height:33px;background:#fff;"></div>
<div class="t" style="left:982px;top:355px;font-size:10px;color:#0000ff;">选区擦</div>
<svg style="left:1003px;top:365px" width="21" height="20" viewBox="0 0 19 18"><circle cx="7.5" cy="8.5" r="6.5" fill="none" stroke="#000" stroke-dasharray="1.5,1.5"/><text x="3" y="8" font-family="Liberation Sans" font-size="8" fill="#000">S</text><path d="M6,12 L12,6 L16,10 L10,16Z" fill="#fff" stroke="#777" stroke-width="0.8"/><path d="M9,9 L12,6 L16,10 L13,13Z" fill="#777"/></svg>
<div style="left:1025px;top:352px;width:44px;height:33px;background:#fff;"></div>
<div class="t" style="left:1027px;top:355px;font-size:10px;color:#000;">油漆桶</div>
<svg style="left:1048px;top:365px" width="21" height="20" viewBox="0 0 19 18"><path d="M7,8 L13,2 L18,7 L12,13Z" fill="#fff" stroke="#666" stroke-width="0.9"/><path d="M9,10 L15,4 L18,7 L12,13Z" fill="#888"/><path d="M7,8 C4,9 3,12 3,16 L6,16 L6,12 C6,10 7,9 8,9" fill="#888" stroke="#666" stroke-width="0.6"/><path d="M1,16 H9" stroke="#888" stroke-width="1.5"/></svg>
<div style="left:1070px;top:352px;width:44px;height:33px;background:#fff;"></div>
<div class="t" style="left:1072px;top:355px;font-size:10px;color:#000;">渐变</div>
<svg style="left:1093px;top:365px" width="21" height="20" viewBox="0 0 19 18"><defs><linearGradient id="gg"><stop offset="0" stop-color="#000"/><stop offset="1" stop-color="#fff"/></linearGradient></defs><rect x="1.5" y="3.5" width="15" height="12" fill="url(#gg)" stroke="#555" stroke-width="0.8"/></svg>
<div style="left:1115px;top:352px;width:44px;height:33px;background:#fff;"></div>
<div class="t" style="left:1117px;top:355px;font-size:10px;color:#000;">模糊</div>
<svg style="left:1138px;top:365px" width="21" height="20" viewBox="0 0 19 18"><path d="M12,1 C14,5 16,8 16,11 C16,14 14,16 12,16 C10,16 8,14 8,11 C8,8 10,5 12,1Z" fill="#c4c4c4"/><ellipse cx="11.5" cy="12" rx="1.3" ry="1.8" fill="#f4f4f4"/></svg>
<div style="left:980px;top:386px;width:44px;height:33px;background:#fff;"></div>
<div class="t" style="left:982px;top:389px;font-size:10px;color:#000;">特效笔</div>
<svg style="left:1003px;top:399px" width="21" height="20" viewBox="0 0 19 18"><path d="M5,16 L6,12 L15,3 C16,2 17,2 18,3 C19,4 19,5 18,6 L9,15Z" fill="#fff" stroke="#444" stroke-width="0.9"/><path d="M5,16 L6,14 L7,15Z" fill="#000"/><path d="M3,6 L4,4 L5,6 L7,7 L5,8 L4,10 L3,8 L1,7Z M8,1 L8.7,3 L10.5,3.5 L8.7,4 L8,6 L7.3,4 L5.5,3.5 L7.3,3Z" fill="#888"/></svg>
<div style="left:1025px;top:386px;width:44px;height:33px;background:#fff;"></div>
<div class="t" style="left:1027px;top:389px;font-size:10px;color:#000;">橡皮擦</div>
<svg style="left:1048px;top:399px" width="21" height="20" viewBox="0 0 19 18"><path d="M2,11 L10,3 L16,9 L8,17Z" fill="#fff" stroke="#999" stroke-width="0.8"/><path d="M6,7 L10,3 L16,9 L12,13Z" fill="#888" stroke="#777" stroke-width="0.6"/><path d="M7,8 L11,4 L14,7 L10,11Z" fill="#aaa"/></svg>
<div style="left:1070px;top:386px;width:44px;height:33px;background:#dcdcff;border:1px solid #8080ff;"></div>
<div class="t" style="left:1072px;top:389px;font-size:10px;color:#000;">散布</div>
<svg style="left:1093px;top:399px" width="21" height="20" viewBox="0 0 19 18"><path d="M6,9 L10,13 L6,17 L2,13Z" fill="#333"/><path d="M8,3 L10,5 L8,7 L6,5Z" fill="#333"/><rect x="11.5" y="6.5" width="5" height="5" fill="#333"/></svg>
<div style="left:1115px;top:386px;width:44px;height:33px;background:#fff;"></div>
<div class="t" style="left:1117px;top:389px;font-size:10px;color:#000;">涂抹</div>
<svg style="left:1138px;top:399px" width="21" height="20" viewBox="0 0 19 18"><path d="M3,16 L8,11 C7,9 8,6 11,5 C13,4 16,5 17,7 C18,9 17,11 15,12 C14,13 12,13 11,13 L5,17Z" fill="#fff" stroke="#444" stroke-width="0.9"/><path d="M11,8 C12,9 13,9 14,8" fill="none" stroke="#444" stroke-width="0.7"/></svg>
<div style="left:980px;top:420px;width:44px;height:33px;background:#fff;"></div>
<div class="t" style="left:982px;top:423px;font-size:10px;color:#000;">画笔</div>
<svg style="left:1003px;top:433px" width="21" height="20" viewBox="0 0 19 18"><path d="M9,8 L15.5,1.5 C16.5,1 17.5,2 17,3 L10.5,9.5Z" fill="#111"/><path d="M9,8 L10.5,9.5 L6,14 L4.5,12.5Z" fill="#fff" stroke="#333" stroke-width="0.8"/><path d="M4.5,12.5 L6,14 L4,16 C2.5,16.5 2,15.5 2.5,14.5Z" fill="#333"/></svg>
<div style="left:1025px;top:420px;width:44px;height:33px;background:#fff;"></div>
<div class="t" style="left:1027px;top:423px;font-size:10px;color:#000;">铅笔</div>
<svg style="left:1048px;top:433px" width="21" height="20" viewBox="0 0 19 18"><path d="M3,15 L5,10 L14,1 L17,4 L8,13 Z" fill="#555"/><path d="M5,10 L14,1 M6.5,11.5 L15.5,2.5 M8,13 L17,4" stroke="#888" stroke-width="0.6"/><path d="M3,15 L5,10 L8,13Z" fill="#ddd" stroke="#777" stroke-width="0.5"/><path d="M3,15 L3.8,13 L5,14.2Z" fill="#333"/></svg>
<div style="left:1070px;top:420px;width:44px;height:33px;background:#fff;"></div>
<div class="t" style="left:1072px;top:423px;font-size:10px;color:#000;">铅笔</div>
<svg style="left:1093px;top:433px" width="21" height="20" viewBox="0 0 19 18"><path d="M3,15 L5,10 L14,1 L17,4 L8,13 Z" fill="#555"/><path d="M5,10 L14,1 M6.5,11.5 L15.5,2.5 M8,13 L17,4" stroke="#888" stroke-width="0.6"/><path d="M3,15 L5,10 L8,13Z" fill="#ddd" stroke="#777" stroke-width="0.5"/><path d="M3,15 L3.8,13 L5,14.2Z" fill="#333"/></svg>
<div style="left:1115px;top:420px;width:44px;height:33px;background:#fff;"></div>
<div class="t" style="left:1117px;top:423px;font-size:10px;color:#000;">铅笔</div>
<svg style="left:1138px;top:433px" width="21" height="20" viewBox="0 0 19 18"><path d="M3,15 L5,10 L14,1 L17,4 L8,13 Z" fill="#555"/><path d="M5,10 L14,1 M6.5,11.5 L15.5,2.5 M8,13 L17,4" stroke="#888" stroke-width="0.6"/><path d="M3,15 L5,10 L8,13Z" fill="#ddd" stroke="#777" stroke-width="0.5"/><path d="M3,15 L3.8,13 L5,14.2Z" fill="#333"/></svg>
<div style="left:980px;top:454px;width:44px;height:5px;background:#fff;"></div>
<div style="left:1025px;top:454px;width:44px;height:5px;background:#efefef;"></div>
<div style="left:1070px;top:454px;width:44px;height:5px;background:#efefef;"></div>
<div style="left:1115px;top:454px;width:44px;height:5px;background:#efefef;"></div>
<div style="left:980px;top:454px;width:44px;height:5px;overflow:hidden;"><div class="t" style="left:2px;top:2px;font-size:10.5px;">画笔</div></div>
<div style="left:1160px;top:283px;width:17px;height:176px;background:#fff;"></div>
<div style="left:1162px;top:298px;width:13px;height:146px;background:#e6e6e6;"></div>
<div class="btn" style="left:1161px;top:283px;width:15px;height:15px;"><svg style="left:0;top:0" width="13" height="13"><path d="M3.0,8.0 L10.0,8.0 L6.5,4.5Z" fill="#fff"/></svg></div>
<div class="btn" style="left:1161px;top:299px;width:15px;height:91px;"></div>
<div class="btn" style="left:1161px;top:444px;width:15px;height:15px;"><svg style="left:0;top:0" width="13" height="13"><path d="M3.0,5.0 L10.0,5.0 L6.5,8.5Z" fill="#fff"/></svg></div>
<div style="left:977px;top:463px;width:89px;height:1px;background:#d4d4d4;"></div>
<div style="left:1089px;top:463px;width:89px;height:1px;background:#d4d4d4;"></div>
<div style="left:1069px;top:462px;width:16px;height:3px;background:#9a9a9a;border:1px solid #6e6e6e;border-radius:2px;"></div>
<div style="left:977px;top:467px;width:201px;height:55px;background:#fff;border:1px solid #b8b8b8;border-radius:3px;"></div>
<div style="left:979px;top:469px;width:99px;height:51px;background:#000;"></div>
<div style="left:1078px;top:469px;width:98px;height:51px;background:#404040;"></div>
<svg style="left:1078px;top:469px" width="98" height="51"><defs><filter id="sb"><feGaussianBlur stdDeviation="0.8"/></filter><linearGradient id="sg"><stop offset="0" stop-color="#181818"/><stop offset="0.75" stop-color="#262626"/><stop offset="1" stop-color="#3a3a3a"/></linearGradient></defs><path d="M-2,23.5 C12,26 22,27.8 34,27.8 C48,27.5 60,24 70,21" stroke="url(#sg)" stroke-width="5.4" fill="none" filter="url(#sb)"/></svg>
<div style="left:980px;top:525px;width:101px;height:19px;background:#fff;border:1px solid #b4b4b4;border-radius:3px;"></div>
<div class="t" style="left:985px;top:528px;font-size:13px;color:#000;">正常</div>
<div class="btn" style="left:1064px;top:527px;width:15px;height:15px;"><svg style="left:0;top:0" width="13" height="13"><path d="M3.0,5.0 L10.0,5.0 L6.5,8.5Z" fill="#fff"/></svg></div>
<div style="left:1085px;top:526px;width:90px;height:17px;background:#fff;border:1px solid #b0b0b0;border-radius:3px;"></div>
<div style="left:1087px;top:528px;width:86px;height:13px;background:#c0c0c0;"></div>
<div class="t" style="left:1089px;top:529px;font-size:11px;color:#000;">硬度</div>
<div class="t" style="left:1131px;width:40px;text-align:right;top:529px;font-size:11px;color:#000;">100%</div>
<div class="t" style="left:979.5px;top:551px;font-size:12.8px;color:#000;letter-spacing:-0.85px;">画笔大小</div>
<svg style="left:1054px;top:554px" width="11" height="7"><path d="M1,1 L10,1 L5.5,6Z" fill="#222"/></svg>
<div style="left:1071px;top:550px;width:104px;height:15px;background:#fff;border:1px solid #a8a8a8;border-radius:2px;"></div>
<div style="left:1072px;top:552px;width:8px;height:11px;background:#c0c0c0;"></div>
<div class="t" style="left:1075px;top:551px;font-size:12px;color:#000;font-family:'Liberation Serif',serif;letter-spacing:0.2px;">x1.0</div>
<div class="t" style="left:1131px;width:40px;text-align:right;top:551px;font-size:12px;color:#000;font-family:'Liberation Serif',serif;letter-spacing:0.2px;">7.0</div>
<div class="t" style="left:979.5px;top:570px;font-size:12.8px;color:#000;letter-spacing:-0.85px;">最小大小</div>
<div style="left:1052px;top:568px;width:15px;height:15px;background:#fff;border:1px solid #a8a8a8;border-radius:3px;"></div>
<div style="left:1071px;top:568px;width:84px;height:15px;background:#fff;border:1px solid #dedede;border-radius:3px;"></div>
<div style="left:1073px;top:570px;width:40px;height:11px;background:#dedede;"></div>
<div class="t" style="left:1111px;width:40px;text-align:right;top:571px;font-size:11px;color:#b8b8b8;">50%</div>
<div class="t" style="left:979.5px;top:590px;font-size:12.8px;color:#000;letter-spacing:-0.85px;">画笔浓度</div>
<div style="left:1071px;top:589px;width:104px;height:15px;background:#fff;border:1px solid #a8a8a8;border-radius:2px;"></div>
<div style="left:1073px;top:591px;width:84px;height:11px;background:conic-gradient(#d8d8d8 25%,#c4c4c4 0 50%,#d8d8d8 0 75%,#c4c4c4 0) 0 0/12px 11px;"></div>
<div class="t" style="left:1091px;width:80px;text-align:right;top:591px;font-size:11px;color:#000;">84</div>
<div class="t" style="left:979.5px;top:609px;font-size:12.8px;color:#000;letter-spacing:-0.85px;">最小浓度</div>
<div style="left:1052px;top:607px;width:15px;height:15px;background:#fff;border:1px solid #a8a8a8;border-radius:3px;"></div>
<svg style="left:1052px;top:607px" width="15" height="15"><path d="M3,11 L4,8 L9,3 L11,5 L6,10Z" fill="#fff" stroke="#888" stroke-width="0.8"/><path d="M10,8 V11 M8,10 L10,12 L12,10 M7.5,13 H12.5" stroke="#000" stroke-width="1.3"/></svg>
<div style="left:1071px;top:607px;width:84px;height:15px;background:#fff;border:1px solid #a8a8a8;border-radius:2px;"></div>
<div class="t" style="left:1071px;width:80px;text-align:right;top:609px;font-size:11px;color:#000;">0%</div>
<div style="left:977px;top:628px;width:201px;height:1px;background:#d4d4d4;"></div>
<svg style="left:978px;top:636px" width="7" height="11"><path d="M1,0.5 L6,5 L1,9.5Z" fill="#7a3a14"/></svg>
<div style="left:989px;top:632px;width:118px;height:19px;background:#fff;border:1px solid #b4b4b4;border-radius:3px;"></div>
<div class="t" style="left:991px;top:635px;font-size:12.5px;color:#000;">【常规的圆形】</div>
<div class="btn" style="left:1090px;top:634px;width:15px;height:15px;"><svg style="left:0;top:0" width="13" height="13"><path d="M3.0,5.0 L10.0,5.0 L6.5,8.5Z" fill="#fff"/></svg></div>
<div style="left:1111px;top:633px;width:64px;height:17px;background:#fff;border:1px solid #b0b0b0;border-radius:3px;"></div>
<div style="left:1113px;top:635px;width:29px;height:13px;background:#c0c0c0;"></div>
<div class="t" style="left:1115px;top:636px;font-size:11px;color:#000;">流量</div>
<div class="t" style="left:1131px;width:40px;text-align:right;top:636px;font-size:11px;color:#000;">48</div>
<div style="left:977px;top:654px;width:201px;height:1px;background:#d4d4d4;"></div>
<svg style="left:978px;top:662px" width="7" height="11"><path d="M1,0.5 L6,5 L1,9.5Z" fill="#7a3a14"/></svg>
<div style="left:989px;top:658px;width:118px;height:19px;background:#fff;border:1px solid #b4b4b4;border-radius:3px;"></div>
<div class="t" style="left:991px;top:661px;font-size:12.5px;color:#000;">【无纹理】</div>
<div class="btn" style="left:1090px;top:660px;width:15px;height:15px;"><svg style="left:0;top:0" width="13" height="13"><path d="M3.0,5.0 L10.0,5.0 L6.5,8.5Z" fill="#fff"/></svg></div>
<div style="left:1111px;top:659px;width:64px;height:17px;background:#fff;border:1px solid #e4e4e4;border-radius:3px;"></div>
<div style="left:1113px;top:661px;width:57px;height:13px;background:#dedede;"></div>
<div class="t" style="left:1115px;top:662px;font-size:11px;color:#b8b8b8;">强度</div>
<div class="t" style="left:1131px;width:40px;text-align:right;top:662px;font-size:11px;color:#b8b8b8;">95</div>
<div style="left:977px;top:680px;width:201px;height:1px;background:#d4d4d4;"></div>
<div style="left:977px;top:684px;width:201px;height:185px;background:#fff;border:1px solid #a8a8a8;border-radius:3px;"></div>
<div style="left:979px;top:685px;width:181px;height:183px;overflow:hidden;background:#d8d8d8;"><div style="left:1px;top:-6px;width:35px;height:34px;background:#fff;"></div><div style="left:17.0px;top:5.0px;width:3px;height:3px;border-radius:50%;background:#000;"></div><div class="t" style="left:1px;width:35px;text-align:center;top:18px;font-size:9.5px;">2<span style="position:static;margin-right:1.5px">.</span>3</div><div style="left:37px;top:-6px;width:35px;height:34px;background:#fff;"></div><div style="left:53.0px;top:5.0px;width:3px;height:3px;border-radius:50%;background:#000;"></div><div class="t" style="left:37px;width:35px;text-align:center;top:18px;font-size:9.5px;">2<span style="position:static;margin-right:1.5px">.</span>6</div><div style="left:73px;top:-6px;width:35px;height:34px;background:#fff;"></div><div style="left:89.0px;top:5.0px;width:3px;height:3px;border-radius:50%;background:#000;"></div><div class="t" style="left:73px;width:35px;text-align:center;top:18px;font-size:9.5px;">3</div><div style="left:109px;top:-6px;width:35px;height:34px;background:#fff;"></div><div style="left:124.75px;top:4.75px;width:3.5px;height:3.5px;border-radius:50%;background:#000;"></div><div class="t" style="left:109px;width:35px;text-align:center;top:18px;font-size:9.5px;">3<span style="position:static;margin-right:1.5px">.</span>5</div><div style="left:145px;top:-6px;width:35px;height:34px;background:#fff;"></div><div style="left:160.25px;top:4.25px;width:4.5px;height:4.5px;border-radius:50%;background:#000;"></div><div class="t" style="left:145px;width:35px;text-align:center;top:18px;font-size:9.5px;">4</div><div style="left:1px;top:29px;width:35px;height:34px;background:#fff;"></div><div style="left:15.75px;top:38.75px;width:5.5px;height:5.5px;border-radius:50%;background:#000;"></div><div class="t" style="left:1px;width:35px;text-align:center;top:53px;font-size:9.5px;">5</div><div style="left:37px;top:29px;width:35px;height:34px;background:#fff;"></div><div style="left:51.5px;top:38.5px;width:6px;height:6px;border-radius:50%;background:#000;"></div><div class="t" style="left:37px;width:35px;text-align:center;top:53px;font-size:9.5px;">6</div><div style="left:73px;top:29px;width:35px;height:34px;background:#dcdcff;border:1px solid #8080ff;"></div><div style="left:87.0px;top:38.0px;width:7px;height:7px;border-radius:50%;background:#000;"></div><div class="t" style="left:73px;width:35px;text-align:center;top:53px;font-size:9.5px;">7</div><div style="left:109px;top:29px;width:35px;height:34px;background:#fff;"></div><div style="left:122.6px;top:37.6px;width:7.8px;height:7.8px;border-radius:50%;background:#000;"></div><div class="t" style="left:109px;width:35px;text-align:center;top:53px;font-size:9.5px;">8</div><div style="left:145px;top:29px;width:35px;height:34px;background:#fff;"></div><div style="left:157.8px;top:36.8px;width:9.4px;height:9.4px;border-radius:50%;background:#000;"></div><div class="t" style="left:145px;width:35px;text-align:center;top:53px;font-size:9.5px;">9</div><div style="left:1px;top:64px;width:35px;height:34px;background:#fff;"></div><div style="left:13.5px;top:71.5px;width:10px;height:10px;border-radius:50%;background:#000;"></div><div class="t" style="left:1px;width:35px;text-align:center;top:88px;font-size:9.5px;">10</div><div style="left:37px;top:64px;width:35px;height:34px;background:#fff;"></div><div style="left:48.5px;top:70.5px;width:12px;height:12px;border-radius:50%;background:#000;"></div><div class="t" style="left:37px;width:35px;text-align:center;top:88px;font-size:9.5px;">12</div><div style="left:73px;top:64px;width:35px;height:34px;background:#fff;"></div><div style="left:83.5px;top:69.5px;width:14px;height:14px;border-radius:50%;background:#000;"></div><div class="t" style="left:73px;width:35px;text-align:center;top:88px;font-size:9.5px;">14</div><div style="left:109px;top:64px;width:35px;height:34px;background:#fff;"></div><div style="left:118.5px;top:68.5px;width:16px;height:16px;border-radius:50%;background:#000;"></div><div class="t" style="left:109px;width:35px;text-align:center;top:88px;font-size:9.5px;">16</div><div style="left:145px;top:64px;width:35px;height:34px;background:#fff;"></div><div style="left:153.0px;top:67.0px;width:19px;height:19px;border-radius:50%;background:#000;"></div><div class="t" style="left:145px;width:35px;text-align:center;top:88px;font-size:9.5px;">20</div><div style="left:1px;top:99px;width:35px;height:34px;background:#fff;"></div><div style="left:9.0px;top:102.0px;width:19px;height:19px;border-radius:50%;background:#000;"></div><div class="t" style="left:1px;width:35px;text-align:center;top:123px;font-size:9.5px;">25</div><div style="left:37px;top:99px;width:35px;height:34px;background:#fff;"></div><div style="left:45.0px;top:102.0px;width:19px;height:19px;border-radius:50%;background:#000;"></div><div class="t" style="left:37px;width:35px;text-align:center;top:123px;font-size:9.5px;">30</div><div style="left:73px;top:99px;width:35px;height:34px;background:#fff;"></div><div style="left:81.0px;top:102.0px;width:19px;height:19px;border-radius:50%;background:#000;"></div><div class="t" style="left:73px;width:35px;text-align:center;top:123px;font-size:9.5px;">35</div><div style="left:109px;top:99px;width:35px;height:34px;background:#fff;"></div><div style="left:117.0px;top:102.0px;width:19px;height:19px;border-radius:50%;background:#000;"></div><div class="t" style="left:109px;width:35px;text-align:center;top:123px;font-size:9.5px;">40</div><div style="left:145px;top:99px;width:35px;height:34px;background:#fff;"></div><div style="left:153.0px;top:102.0px;width:19px;height:19px;border-radius:50%;background:#000;"></div><div class="t" style="left:145px;width:35px;text-align:center;top:123px;font-size:9.5px;">50</div><div style="left:1px;top:134px;width:35px;height:34px;background:#fff;"></div><div style="left:9.0px;top:137.0px;width:19px;height:19px;border-radius:50%;background:#000;"></div><div class="t" style="left:1px;width:35px;text-align:center;top:158px;font-size:9.5px;">60</div><div style="left:37px;top:134px;width:35px;height:34px;background:#fff;"></div><div style="left:45.0px;top:137.0px;width:19px;height:19px;border-radius:50%;background:#000;"></div><div class="t" style="left:37px;width:35px;text-align:center;top:158px;font-size:9.5px;">70</div><div style="left:73px;top:134px;width:35px;height:34px;background:#fff;"></div><div style="left:81.0px;top:137.0px;width:19px;height:19px;border-radius:50%;background:#000;"></div><div class="t" style="left:73px;width:35px;text-align:center;top:158px;font-size:9.5px;">80</div><div style="left:109px;top:134px;width:35px;height:34px;background:#fff;"></div><div style="left:117.0px;top:137.0px;width:19px;height:19px;border-radius:50%;background:#000;"></div><div class="t" style="left:109px;width:35px;text-align:center;top:158px;font-size:9.5px;">100</div><div style="left:145px;top:134px;width:35px;height:34px;background:#fff;"></div><div style="left:153.0px;top:137.0px;width:19px;height:19px;border-radius:50%;background:#000;"></div><div class="t" style="left:145px;width:35px;text-align:center;top:158px;font-size:9.5px;">120</div><div style="left:1px;top:169px;width:35px;height:34px;background:#fff;"></div><div style="left:9.0px;top:172.0px;width:19px;height:19px;border-radius:50%;background:#000;"></div><div class="t" style="left:1px;width:35px;text-align:center;top:193px;font-size:9.5px;">150</div><div style="left:37px;top:169px;width:35px;height:34px;background:#fff;"></div><div style="left:45.0px;top:172.0px;width:19px;height:19px;border-radius:50%;background:#000;"></div><div class="t" style="left:37px;width:35px;text-align:center;top:193px;font-size:9.5px;">200</div><div style="left:73px;top:169px;width:35px;height:34px;background:#fff;"></div><div style="left:81.0px;top:172.0px;width:19px;height:19px;border-radius:50%;background:#000;"></div><div class="t" style="left:73px;width:35px;text-align:center;top:193px;font-size:9.5px;">250</div><div style="left:109px;top:169px;width:35px;height:34px;background:#fff;"></div><div style="left:117.0px;top:172.0px;width:19px;height:19px;border-radius:50%;background:#000;"></div><div class="t" style="left:109px;width:35px;text-align:center;top:193px;font-size:9.5px;">300</div><div style="left:145px;top:169px;width:35px;height:34px;background:#fff;"></div><div style="left:153.0px;top:172.0px;width:19px;height:19px;border-radius:50%;background:#000;"></div><div class="t" style="left:145px;width:35px;text-align:center;top:193px;font-size:9.5px;">400</div></div>
<div style="left:1160px;top:685px;width:17px;height:183px;background:#fff;"></div>
<div style="left:1162px;top:701px;width:13px;height:151px;background:#e6e6e6;"></div>
<div class="btn" style="left:1161px;top:687px;width:15px;height:15px;"><svg style="left:0;top:0" width="13" height="13"><path d="M3.0,8.0 L10.0,8.0 L6.5,4.5Z" fill="#fff"/></svg></div>
<div class="btn" style="left:1161px;top:720px;width:15px;height:77px;"></div>
<div class="btn" style="left:1161px;top:852px;width:15px;height:15px;"><svg style="left:0;top:0" width="13" height="13"><path d="M3.0,5.0 L10.0,5.0 L6.5,8.5Z" fill="#fff"/></svg></div>
<div style="left:977px;top:872px;width:25px;height:10px;background:#f4f4f4;border:1px solid #d8d8d8;border-radius:3px;"></div></body></html>
